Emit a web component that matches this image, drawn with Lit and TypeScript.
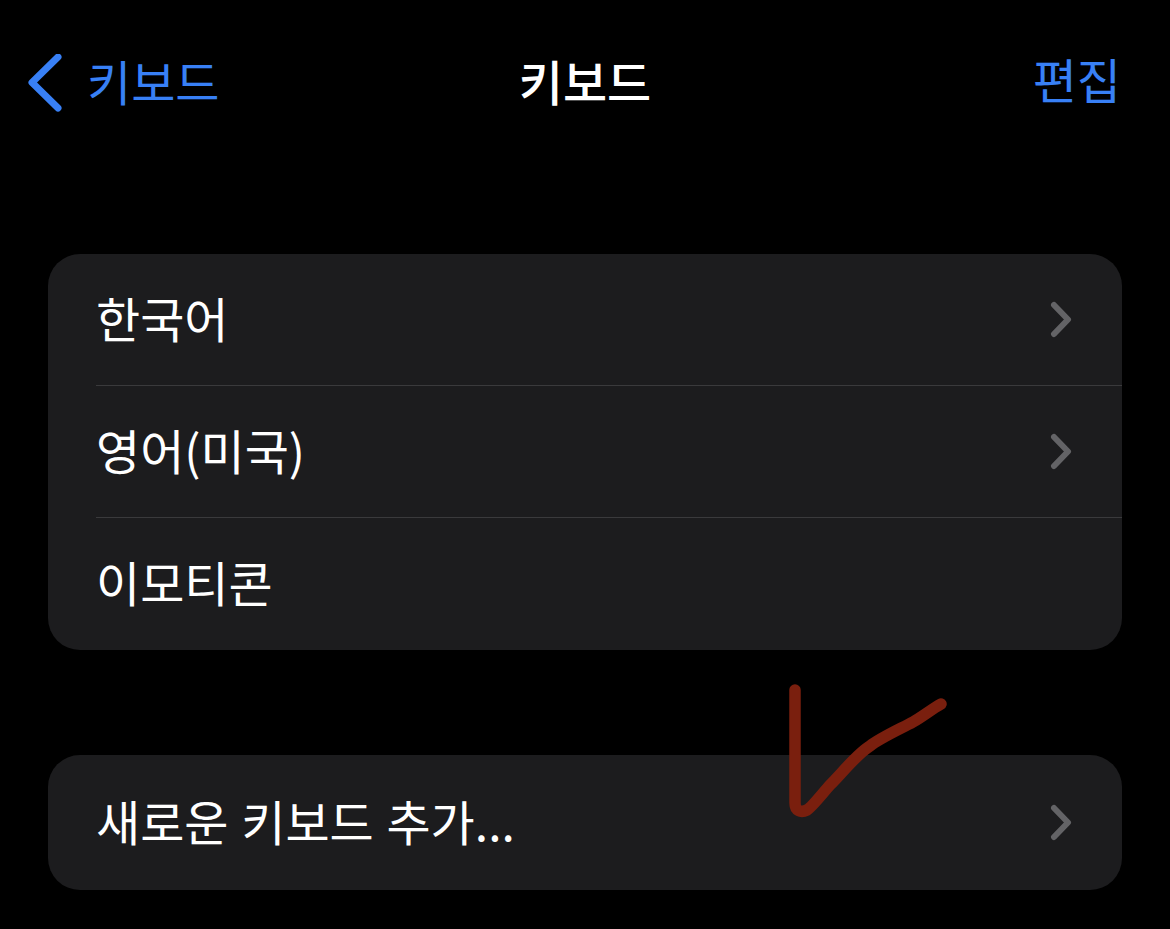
import { LitElement, html, css, svg } from "lit";
import { customElement } from "lit/decorators.js";

const chevron = svg`<path d="M4 4 L18 18.5 L4 33" fill="none" stroke="currentColor" stroke-linecap="round" stroke-linejoin="round"/>`;

@customElement("app-root")
export class AppRoot extends LitElement {
  static styles = css`
    :host {
      display: block;
      position: relative;
      width: 1170px;
      height: 929px;
      overflow: hidden;
      background: #000;
      color: #fff;
      font-family: "Noto Sans CJK KR", "Noto Sans", sans-serif;
    }
    .nav {
      display: grid;
      grid-template-columns: 1fr auto 1fr;
      align-items: center;
      height: 56px;
      padding: 54px 49px 0 26px;
      font-size: 48px;
      line-height: 56px;
    }
    .back {
      display: flex;
      align-items: center;
      gap: 23px;
      color: #3880f6;
    }
    .back svg {
      stroke-width: 7;
      flex: none;
    }
    .back span {
      margin-top: -8px;
    }
    .title {
      font-weight: 500;
      margin-left: 23px;
      margin-top: -9px;
    }
    .edit {
      justify-self: end;
      color: #3880f6;
      margin-top: -12px;
    }
    .card {
      margin: 0 48px;
      background: #1c1c1e;
      border-radius: 32px;
      overflow: hidden;
    }
    .list {
      margin-top: 144px;
    }
    .add {
      margin-top: 105px;
    }
    .row {
      display: flex;
      align-items: center;
      justify-content: space-between;
      height: 132px;
      padding-right: 48px;
      margin-left: 48px;
      font-size: 48px;
      word-spacing: 2px;
      box-sizing: border-box;
      border-bottom: 1px solid #3a3a3c;
    }
    .row:last-child {
      border-bottom: 0;
    }
    .row span {
      margin-top: -6px;
    }
    .add .row {
      height: 135px;
    }
    .row svg {
      width: 24px;
      height: 37px;
      color: #636366;
      stroke-width: 6;
    }
    .mark {
      position: absolute;
      left: 0;
      top: 0;
    }
  `;

  private row(label: string, arrow = true) {
    return html`<div class="row">
      <span>${label}</span>
      ${arrow ? html`<svg viewBox="0 0 24 37">${chevron}</svg>` : null}
    </div>`;
  }

  render() {
    return html`
      <div class="nav">
        <div class="back">
          <svg width="38" height="60" viewBox="0 0 38 60">
            <path d="M32 3 L6 28.5 L32 54" fill="none" stroke="currentColor" stroke-linecap="round" stroke-linejoin="round" />
          </svg>
          <span>키보드</span>
        </div>
        <div class="title">키보드</div>
        <div class="edit">편집</div>
      </div>
      <div class="card list">
        ${this.row("한국어")} ${this.row("영어(미국)")} ${this.row("이모티콘", false)}
      </div>
      <div class="card add">${this.row("새로운 키보드 추가...")}</div>
      <svg class="mark" width="1170" height="929" viewBox="0 0 1170 929">
        <path
          d="M795 690 L795 803 C795 811 801 813 807 810 C812 807 822 794 830 785 C842 773 858 753 870 746 C880 738 900 729 913 722 C922 717 932 709 941 704"
          fill="none"
          stroke="#7a1f0e"
          stroke-width="11.5"
          stroke-linecap="round"
          stroke-linejoin="round"
        />
      </svg>
    `;
  }
}
